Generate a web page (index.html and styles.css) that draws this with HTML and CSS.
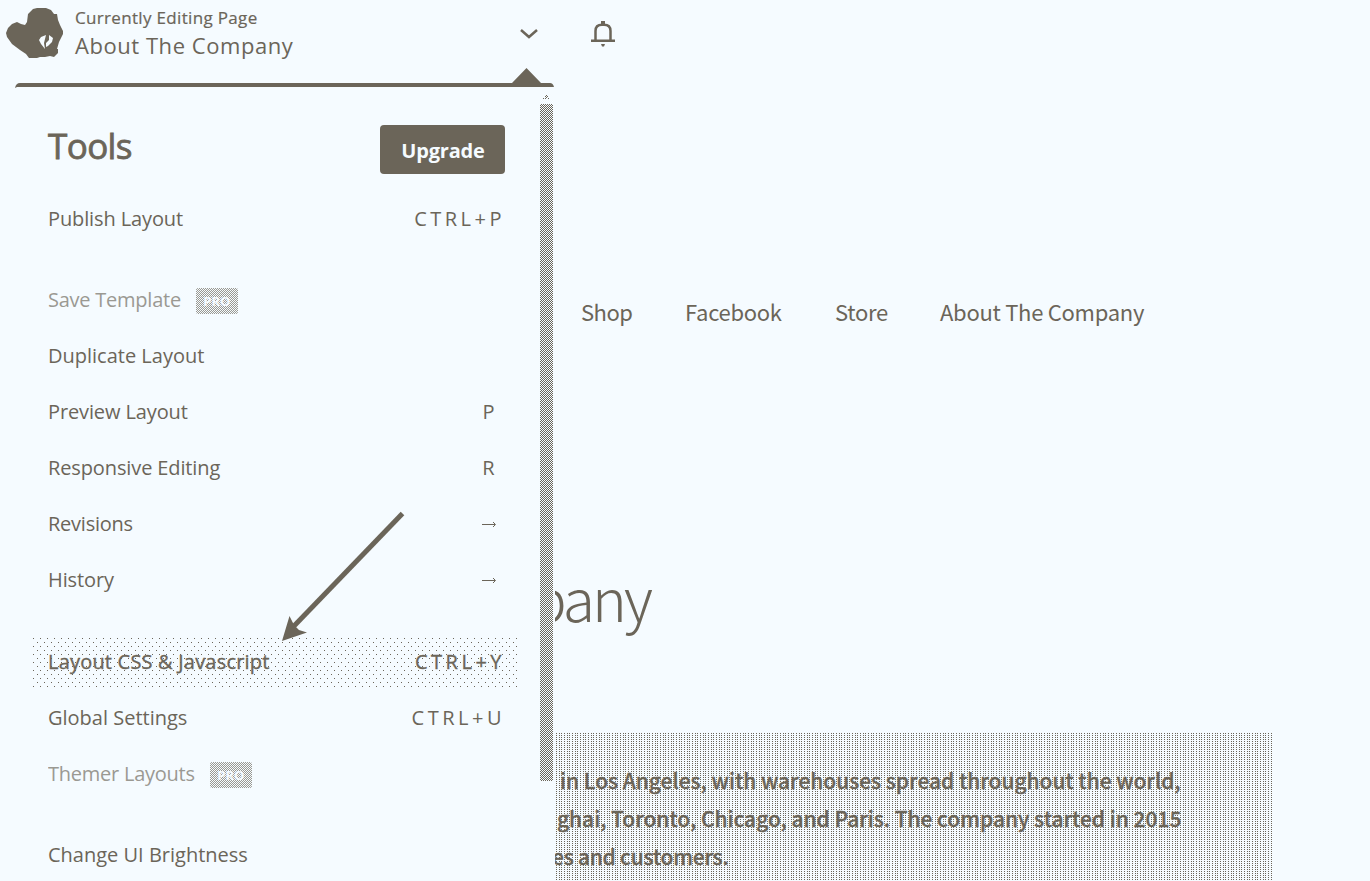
FILE: index.html
```html
<!DOCTYPE html>
<html lang="en">
<head>
<meta charset="utf-8">
<title>About The Company</title>
<link rel="stylesheet" href="styles.css">
</head>
<body>
<main class="site">
  <nav class="nav"><a class="n-shop">Shop</a><a class="n-fb">Facebook</a><a class="n-store">Store</a><a class="n-about">About The Company</a></nav>
  <h1 class="hero">pany</h1>
  <section class="intro">
    <p class="l1">in Los Angeles, with warehouses spread throughout the world,</p>
    <p class="l2">ghai, Toronto, Chicago, and Paris. The company started in 2015</p>
    <p class="l3">es and customers.</p>
  </section>
</main>
<header class="bar">
  <svg class="logo" width="58" height="52" viewBox="6 8 58 52"><path fill="#6b6559" d="M33 9L37 8H46L51 10L54 14H57L58 20L60 25L63 31V34L59 42L57 49H58V53L54 57L50 56L45 57H40L37 58H29L26 54L20 50L12 44L7 37L6 33L8 28L12 24L17 22L21 24L25 25L27 22L28 14Z"/><path fill="#f5fbff" d="M46 35L45 39L44 43L45 49L41 44L39 40L41 37ZM49 35L53 38L52 42L48 46L46 47L46 43L49 40Z"/></svg>
  <div class="titles"><span class="small">Currently Editing Page</span><span class="big">About The Company</span></div>
  <svg class="chev" width="18" height="10" viewBox="0 0 18 10"><path d="M1 1L9 8L17 1" fill="none" stroke="#6b6559" stroke-width="2.500"/></svg>
  <svg class="bell" width="24" height="26" viewBox="0 0 24 26"><path d="M4.500 19.500V10Q4.500 3.800 11 3.800H13Q19.500 3.800 19.500 10V19.500M0 19.800H24" fill="none" stroke="#6b6559" stroke-width="2.500"/><path d="M10 0H14V4H10ZM10 23H14L13 25.500H11Z" fill="#6b6559"/></svg>
</header>
<aside class="panel">
  <svg class="edge" width="540" height="20" viewBox="0 0 540 20"><path d="M0 20Q1 15 5 15H497L511.500 0L526 15H535Q538 15 539 19H2Z" fill="#6b6559"/></svg>
  <div class="body">
    <div class="menu">
      <div class="head"><h2>Tools</h2><button class="upgrade">Upgrade</button></div>
      <div class="row first"><span class="t-prev">Publish Layout</span><kbd>CTRL+P</kbd></div>
      <div class="row off gap"><span class="t-save">Save Template</span><i class="pro">PRO</i></div>
      <div class="row"><span>Duplicate Layout</span></div>
      <div class="row"><span class="t-prev">Preview Layout</span><kbd class="one">P</kbd></div>
      <div class="row"><span class="t-prev">Responsive Editing</span><kbd class="one">R</kbd></div>
      <div class="row"><span class="t-save">Revisions</span><svg class="go" width="15" height="7" viewBox="0 0 15 7"><path d="M0 3.500H13M11 1L13.500 3.500L11 6" fill="none" stroke="#6b6559"/></svg></div>
      <div class="row"><span class="t-prev">History</span><svg class="go" width="15" height="7" viewBox="0 0 15 7"><path d="M0 3.500H13M11 1L13.500 3.500L11 6" fill="none" stroke="#6b6559"/></svg></div>
      <div class="row hot gap"><span class="t-css">Layout CSS &amp; Javascript</span><kbd>CTRL+Y</kbd></div>
      <div class="row"><span>Global Settings</span><kbd>CTRL+U</kbd></div>
      <div class="row off"><span class="t-save">Themer Layouts</span><i class="pro">PRO</i></div>
      <div class="row gap"><span>Change UI Brightness</span></div>
    </div>
    <div class="scroll"><svg width="7" height="5" viewBox="0 0 7 5"><path d="M0 4h1v1H0zM2 4h1v1H2zM5 4h1v1H5zM2 2h1v1H2zM3 1h1v1H3zM4 2h1v1H4zM3 3h1v1H3z" fill="#6b6559"/></svg><div class="thumb"></div></div>
  </div>
</aside>
<svg class="pointer" width="124" height="132" viewBox="0 0 124 132"><path d="M120.500 2.500L12 115" stroke="#6b6559" stroke-width="5" fill="none"/><path d="M0 130L7.500 105L12 114L17 119L25 121.500Z" fill="#6b6559"/></svg>
</body>
</html>
```
FILE: styles.css
```css
:root { --ink: #6b6559; --paper: #f5fbff; }
* { box-sizing: border-box; margin: 0; padding: 0; }
body { width: 1370px; height: 881px; overflow: hidden; position: relative; background: var(--paper); color: var(--ink); font-family: "Open Sans", sans-serif; }
.site { padding: 293px 0 0 555px; height: 881px; font-family: "Noto Sans CJK SC", sans-serif; white-space: nowrap; }
.nav { display: flex; height: 36px; line-height: 36px; font-size: 22px; letter-spacing: -.28px; padding-left: 26px; }
.n-shop { width: 104px; letter-spacing: -.5px; }
.n-fb { width: 150px; }
.n-store { width: 105px; }
.hero { margin: 223px 0 0 -24px; height: 90px; line-height: 90px; font-size: 59px; font-weight: 300; letter-spacing: -3px; }
.intro { margin-top: 91px; width: 717px; height: 148px; padding-top: 28px; font-size: 21px; font-weight: 500; line-height: 38px; background: conic-gradient(from 0deg at 1px 1px, transparent 75%, var(--ink) 0) 1px 0 / 8px 2px, conic-gradient(from 0deg at 1px 1px, transparent 75%, var(--ink) 0) 4px 0 / 8px 2px, conic-gradient(from 0deg at 1px 1px, transparent 75%, var(--ink) 0) 6px 0 / 8px 2px; -webkit-text-stroke: .3px var(--ink); }
.l1 { padding-left: 5px; letter-spacing: -.03px; }
.l2 { padding-left: 2px; letter-spacing: -.03px; }
.l3 { margin-left: -3px; letter-spacing: -.25px; }
.bar { position: absolute; inset: 0 auto auto 0; width: 640px; height: 68px; display: flex; padding-left: 6px; }
.logo { margin-top: 8px; }
.titles { width: 456px; padding-left: 11px; display: flex; flex-direction: column; white-space: nowrap; }
.small { font-size: 17px; line-height: 24px; margin-top: 6px; letter-spacing: .33px; -webkit-text-stroke: .2px var(--ink); }
.big { font-size: 22px; line-height: 30px; letter-spacing: .55px; }
.chev { margin-top: 29px; }
.bell { margin: 21px 0 0 53px; }
.panel { position: absolute; left: 0; top: 68px; width: 555px; height: 813px; overflow: hidden; }
.edge { display: block; margin-left: 15px; }
.body { display: flex; background: var(--paper); height: 793px; }
.menu { width: 540px; padding: 37px 20px 0 33px; }
.head { display: flex; justify-content: space-between; padding: 0 15px; height: 49px; }
h2 { font-size: 35px; line-height: 41px; font-weight: 400; letter-spacing: -.6px; -webkit-text-stroke: .8px var(--ink); }
.upgrade { width: 125px; height: 49px; border: 0; border-radius: 4px; background: var(--ink); color: var(--paper); font: 700 20px/49px "Open Sans", sans-serif; letter-spacing: -.2px; padding: 1px 0 0 1px; }
.row { display: flex; align-items: center; height: 50px; margin-bottom: 6px; padding: 0 15px 2px; font-size: 20px; white-space: nowrap; }
.first { margin-top: 20px; }
.gap { margin-top: 31px; }
.row.hot { margin-top: 32px; }
.off { opacity: .65; }
.t-prev { letter-spacing: -.12px; }
.t-save { letter-spacing: -.24px; }
.t-css { letter-spacing: .2px; }
kbd { margin-left: auto; font: 400 20px "Open Sans", sans-serif; letter-spacing: 3.5px; }
.one { padding-right: 7px; }
.go { margin: 3px 8px 0 auto; }
.pro { width: 42px; height: 26px; margin: 3px 0 0 15px; border-radius: 2px; font: 700 13px/26px "Open Sans", sans-serif; text-align: center; color: var(--paper); background: conic-gradient(var(--ink) 25%, var(--paper) 0 50%, var(--ink) 0 75%, var(--paper) 0) 0 0 / 2px 2px; }
.hot { background: conic-gradient(from 0deg at 1px 1px, transparent 75%, var(--ink) 0) 0 1px / 7px 8px, conic-gradient(from 0deg at 1px 1px, transparent 75%, var(--ink) 0) 4px 5px / 7px 8px; -webkit-text-stroke: .35px var(--ink); width: 487px; }
.scroll { width: 13px; padding-top: 6px; display: flex; flex-direction: column; align-items: center; }
.thumb { width: 13px; height: 677px; margin-top: 5px; background: conic-gradient(var(--ink) 25%, var(--paper) 0 50%, var(--ink) 0 75%, var(--paper) 0) 0 0 / 2px 2px; }
.pointer { position: absolute; left: 282px; top: 511px; }
```
